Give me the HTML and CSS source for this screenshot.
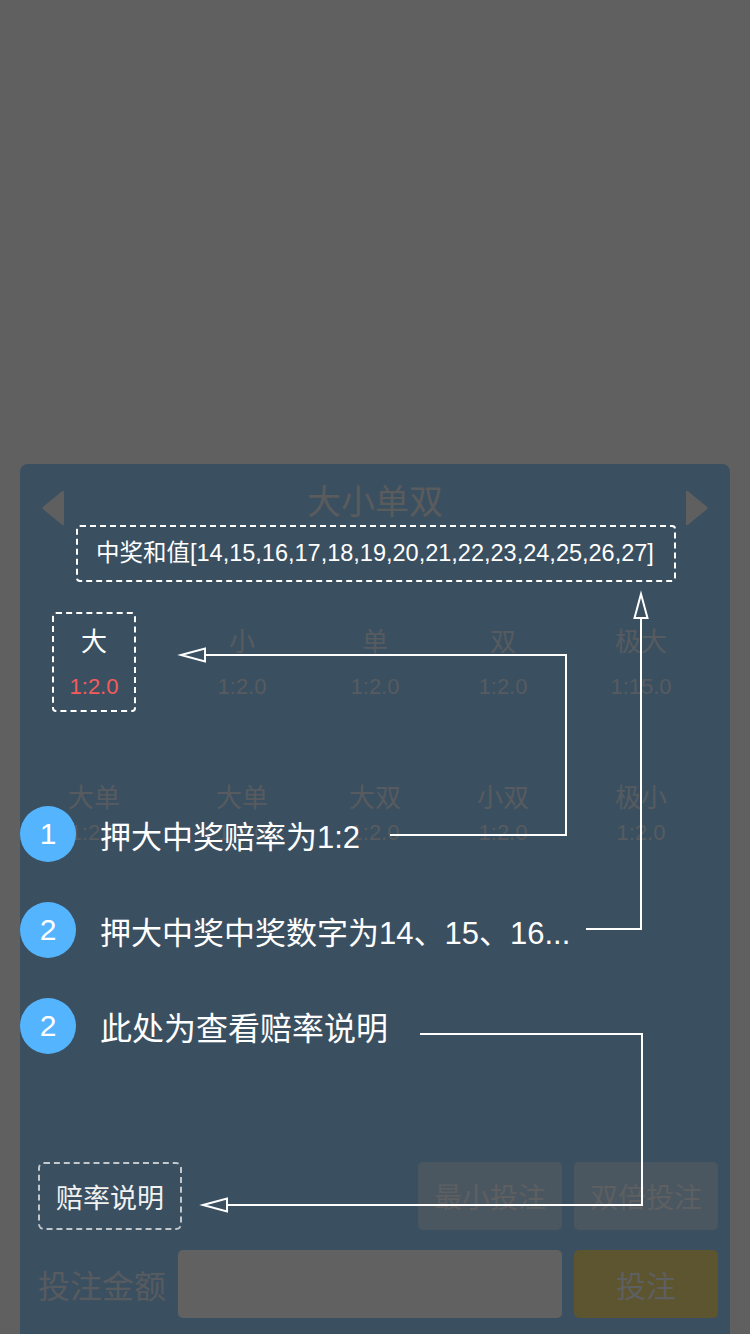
FILE: index.html
```html
<!DOCTYPE html>
<html lang="zh-CN">
<head>
<meta charset="utf-8">
<title>大小单双</title>
<link rel="stylesheet" href="styles.css">
</head>
<body>
<div class="screen">
  <section class="panel">
    <header class="panel-head">
      <svg class="nav" viewBox="0 0 22 36" aria-hidden="true"><path d="M22 2.5V33.5Q22 36.5 19.6 34.6L1.4 19.6Q-0.4 18 1.4 16.4L19.6 1.4Q22 -0.5 22 2.5Z"/></svg>
      <h2 class="panel-title">大小单双</h2>
      <svg class="nav" viewBox="0 0 22 36" aria-hidden="true"><path d="M0 2.5V33.5Q0 36.5 2.4 34.6L20.6 19.6Q22.4 18 20.6 16.4L2.4 1.4Q0 -0.5 0 2.5Z"/></svg>
    </header>

    <div class="win-tip">中奖和值[14,15,16,17,18,19,20,21,22,23,24,25,26,27]</div>

    <div class="odds-row odds-row--first">
      <div class="odds-cell is-focus"><span class="odds-name">大</span><span class="odds-rate">1:2.0</span></div>
      <div class="odds-cell"><span class="odds-name">小</span><span class="odds-rate">1:2.0</span></div>
      <div class="odds-cell"><span class="odds-name">单</span><span class="odds-rate">1:2.0</span></div>
      <div class="odds-cell"><span class="odds-name">双</span><span class="odds-rate">1:2.0</span></div>
      <div class="odds-cell"><span class="odds-name">极大</span><span class="odds-rate">1:15.0</span></div>
    </div>
    <div class="odds-row odds-row--second">
      <div class="odds-cell"><span class="odds-name">大单</span><span class="odds-rate">1:2.0</span></div>
      <div class="odds-cell"><span class="odds-name">大单</span><span class="odds-rate">1:2.0</span></div>
      <div class="odds-cell"><span class="odds-name">大双</span><span class="odds-rate">1:2.0</span></div>
      <div class="odds-cell"><span class="odds-name">小双</span><span class="odds-rate">1:2.0</span></div>
      <div class="odds-cell"><span class="odds-name">极小</span><span class="odds-rate">1:2.0</span></div>
    </div>

    <footer class="panel-foot">
      <div class="foot-row">
        <a class="rate-help">赔率说明</a>
        <div class="quick-btns">
          <button class="btn btn-quick">最小投注</button>
          <button class="btn btn-quick">双倍投注</button>
        </div>
      </div>
      <div class="foot-row">
        <span class="amount-label">投注金额</span>
        <div class="amount-input"></div>
        <button class="btn btn-bet">投注</button>
      </div>
    </footer>
  </section>

  <div class="guide">
    <svg class="guide-lines" viewBox="0 0 750 1334" width="750" height="1334" aria-hidden="true">
      <g fill="none" stroke="#ffffff" stroke-width="2">
        <polyline points="390,835 566,835 566,655 205,655"/>
        <polygon points="181,655 205,648.5 205,661.5"/>
        <polyline points="586,929 641,929 641,618"/>
        <polygon points="641,594 634.5,618 647.5,618"/>
        <polyline points="420,1034 642,1034 642,1205 227,1205"/>
        <polygon points="203,1205 227,1198.5 227,1211.5"/>
      </g>
    </svg>
    <ol class="guide-notes">
      <li class="note"><span class="note-num">1</span><span class="note-text">押大中奖赔率为1:2</span></li>
      <li class="note"><span class="note-num">2</span><span class="note-text">押大中奖中奖数字为14、15、16...</span></li>
      <li class="note"><span class="note-num">2</span><span class="note-text note-text--wide">此处为查看赔率说明</span></li>
    </ol>
  </div>
</div>
</body>
</html>
```

FILE: styles.css
```css
* {
  box-sizing: border-box;
}

html,
body {
  margin: 0;
  padding: 0;
}

body {
  width: 750px;
  height: 1334px;
  overflow: hidden;
  background: #606060;
  font-family: "Liberation Sans", "Noto Sans CJK SC", sans-serif;
  color: #ffffff;
}

.screen {
  position: relative;
  width: 750px;
  height: 1334px;
  padding-top: 464px;
}

.panel {
  display: flex;
  flex-direction: column;
  width: 710px;
  height: 870px;
  margin-left: 20px;
  padding: 18px 0 16px;
  background: #3a5061;
  border-radius: 8px 8px 0 0;
}

/* header */
.panel-head {
  display: flex;
  justify-content: space-between;
  align-items: flex-start;
  height: 40px;
  padding: 0 22px;
}

.nav {
  width: 22px;
  height: 36px;
  margin-top: 8px;
  fill: #5f5f5f;
}

.panel-title {
  margin: 0;
  font-size: 34px;
  font-weight: normal;
  line-height: 40px;
  color: #5a5b5c;
}

/* winning tip */
.win-tip {
  height: 57px;
  margin: 3px 54px 0 56px;
  padding-left: 18px;
  border: 2px dashed #ffffff;
  border-radius: 4px;
  font-size: 23.5px;
  line-height: 53px;
  white-space: nowrap;
  color: #ffffff;
}

/* odds grid */
.odds-row {
  display: grid;
  grid-template-columns: 148px 133px 128px 138px 84px;
  margin-left: 32px;
}

.odds-row--first {
  margin-top: 30px;
}

.odds-row--second {
  margin-top: 56px;
}

.odds-cell {
  display: flex;
  flex-direction: column;
  align-items: center;
  width: 84px;
  padding: 12px 0 8px;
  border: 2px dashed transparent;
  border-radius: 4px;
  white-space: nowrap;
}

.odds-name {
  font-size: 26px;
  line-height: 32px;
  color: #575b5f;
}

.odds-rate {
  margin-top: 14px;
  font-size: 22px;
  line-height: 30px;
  color: #575b5f;
}

.odds-row--second .odds-rate {
  margin-top: 4px;
}

.odds-cell.is-focus {
  border-color: #ffffff;
}

.odds-cell.is-focus .odds-name {
  color: #ffffff;
}

.odds-cell.is-focus .odds-rate {
  color: #f55a5c;
}

/* footer */
.panel-foot {
  display: flex;
  flex-direction: column;
  gap: 20px;
  margin-top: auto;
  padding: 0 12px 0 18px;
}

.foot-row {
  display: flex;
  align-items: center;
  height: 68px;
}

.rate-help {
  display: flex;
  align-items: center;
  justify-content: center;
  width: 144px;
  height: 68px;
  border: 2px dashed #c3c8cc;
  border-radius: 6px;
  font-size: 27px;
  color: #f2f2f2;
}

.quick-btns {
  display: flex;
  gap: 12px;
  margin-left: auto;
}

.btn {
  width: 144px;
  height: 68px;
  padding: 0;
  border: none;
  border-radius: 5px;
  font-family: inherit;
  font-size: 28px;
  color: #5d5f61;
}

.btn-quick {
  background: #4a5761;
}

.amount-label {
  flex: 0 0 140px;
  font-size: 32px;
  color: #575b5f;
}

.amount-input {
  flex: 1;
  height: 68px;
  margin-right: 12px;
  background: #616161;
  border-radius: 5px;
}

.btn-bet {
  font-size: 30px;
  background: #5d5430;
}

/* guide overlay */
.guide {
  position: absolute;
  top: 0;
  left: 0;
  width: 750px;
  height: 1334px;
  pointer-events: none;
}

.guide-lines {
  position: absolute;
  top: 0;
  left: 0;
}

.guide-notes {
  position: absolute;
  top: 806px;
  left: 20px;
  display: flex;
  flex-direction: column;
  gap: 40px;
  margin: 0;
  padding: 0;
  list-style: none;
}

.note {
  display: flex;
  align-items: center;
  height: 56px;
}

.note-num {
  width: 56px;
  height: 56px;
  border-radius: 50%;
  background: #55b4fe;
  font-size: 30px;
  line-height: 56px;
  text-align: center;
  color: #ffffff;
}

.note-text {
  margin-left: 24px;
  font-size: 31px;
  color: #ffffff;
  white-space: nowrap;
}

.note-text--wide {
  font-size: 32px;
}
```
